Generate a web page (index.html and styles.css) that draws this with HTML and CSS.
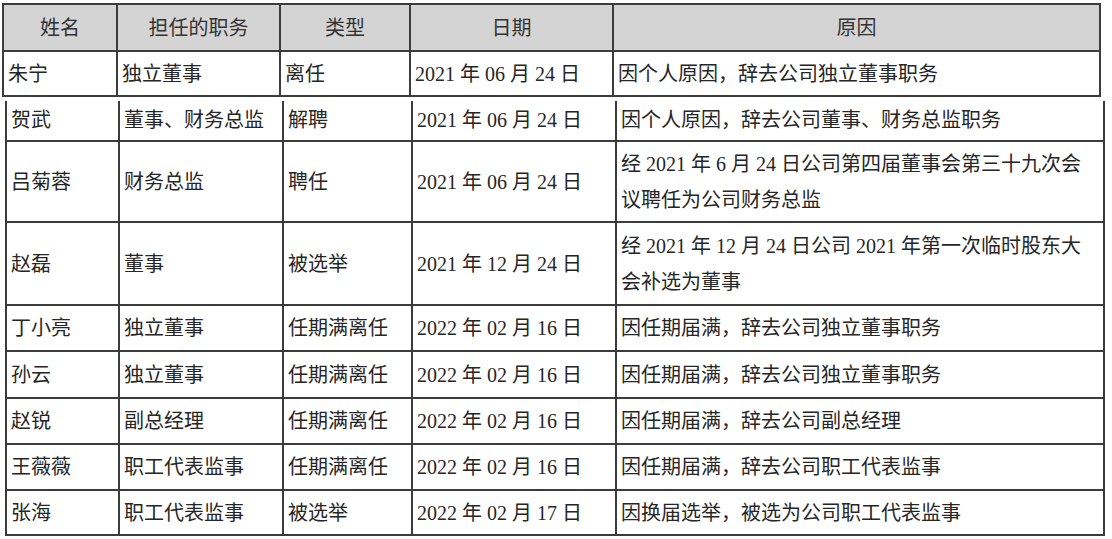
FILE: index.html
```html
<!DOCTYPE html>
<html lang="zh-CN">
<head>
<meta charset="utf-8">
<title>董监高变动</title>
<link rel="stylesheet" href="styles.css">
</head>
<body>
<div class="page">
  <table class="grid grid-top">
    <colgroup>
      <col class="c1"><col class="c2"><col class="c3"><col class="c4"><col class="c5">
    </colgroup>
    <thead>
      <tr class="head">
        <th>姓名</th><th>担任的职务</th><th>类型</th><th>日期</th><th>原因</th>
      </tr>
    </thead>
    <tbody>
      <tr class="r45">
        <td>朱宁</td><td>独立董事</td><td>离任</td><td>2021 年 06 月 24 日</td><td>因个人原因，辞去公司独立董事职务</td>
      </tr>
    </tbody>
  </table>

  <table class="grid grid-bottom">
    <colgroup>
      <col class="d1"><col class="d2"><col class="d3"><col class="d4"><col class="d5">
    </colgroup>
    <tbody>
      <tr class="r-first">
        <td>贺武</td><td>董事、财务总监</td><td>解聘</td><td>2021 年 06 月 24 日</td><td>因个人原因，辞去公司董事、财务总监职务</td>
      </tr>
      <tr class="r81">
        <td>吕菊蓉</td><td>财务总监</td><td>聘任</td><td>2021 年 06 月 24 日</td><td class="two">经 2021 年 6 月 24 日公司第四届董事会第三十九次会<br>议聘任为公司财务总监</td>
      </tr>
      <tr class="r83">
        <td>赵磊</td><td>董事</td><td>被选举</td><td>2021 年 12 月 24 日</td><td class="two">经 2021 年 12 月 24 日公司 2021 年第一次临时股东大<br>会补选为董事</td>
      </tr>
      <tr class="r46">
        <td>丁小亮</td><td>独立董事</td><td>任期满离任</td><td>2022 年 02 月 16 日</td><td>因任期届满，辞去公司独立董事职务</td>
      </tr>
      <tr class="r47">
        <td>孙云</td><td>独立董事</td><td>任期满离任</td><td>2022 年 02 月 16 日</td><td>因任期届满，辞去公司独立董事职务</td>
      </tr>
      <tr class="r46">
        <td>赵锐</td><td>副总经理</td><td>任期满离任</td><td>2022 年 02 月 16 日</td><td>因任期届满，辞去公司副总经理</td>
      </tr>
      <tr class="r46">
        <td>王薇薇</td><td>职工代表监事</td><td>任期满离任</td><td>2022 年 02 月 16 日</td><td>因任期届满，辞去公司职工代表监事</td>
      </tr>
      <tr class="r45">
        <td>张海</td><td>职工代表监事</td><td>被选举</td><td>2022 年 02 月 17 日</td><td>因换届选举，被选为公司职工代表监事</td>
      </tr>
    </tbody>
  </table>
</div>
</body>
</html>
```

FILE: styles.css
```css
html, body {
  margin: 0;
  padding: 0;
  background: #ffffff;
}

.page {
  padding-top: 3px;
  font-family: "Liberation Serif", "Noto Sans CJK SC", serif;
  font-size: 20px;
  color: #262626;
}

.grid {
  border-collapse: collapse;
  table-layout: fixed;
}

.grid th,
.grid td {
  border: 2px solid #3c3c3c;
  padding: 0 4px;
  white-space: nowrap;
  vertical-align: middle;
  text-align: left;
  line-height: 24px;
  overflow: hidden;
}

/* top block: header + first row */
.grid-top {
  width: 1097px;
  margin-left: 2px;
}
.c1 { width: 114px; }
.c2 { width: 163px; }
.c3 { width: 130px; }
.c4 { width: 203px; }
.c5 { width: 487px; }

.head th {
  background: #d4d4d4;
  font-weight: normal;
  text-align: center;
  color: #333333;
  height: 45px;
  padding: 0;
}

.r45 td { height: 43px; }
.r46 td { height: 44px; }
.r47 td { height: 45px; }
.r81 td { height: 79px; }
.r83 td { height: 81px; }

/* bottom block, slightly shifted as in the scanned page */
.grid-bottom {
  width: 1098px;
  margin-left: 5px;
  margin-top: 4px;
}
.grid-bottom tr:first-child td { border-top: none; }
.d1 { width: 113px; }
.d2 { width: 164px; }
.d3 { width: 129px; }
.d4 { width: 204px; }
.d5 { width: 488px; }

.grid .r-first td {
  height: 37px;
  padding-bottom: 2px;
}

.grid td.two {
  line-height: 36px;
}
```
